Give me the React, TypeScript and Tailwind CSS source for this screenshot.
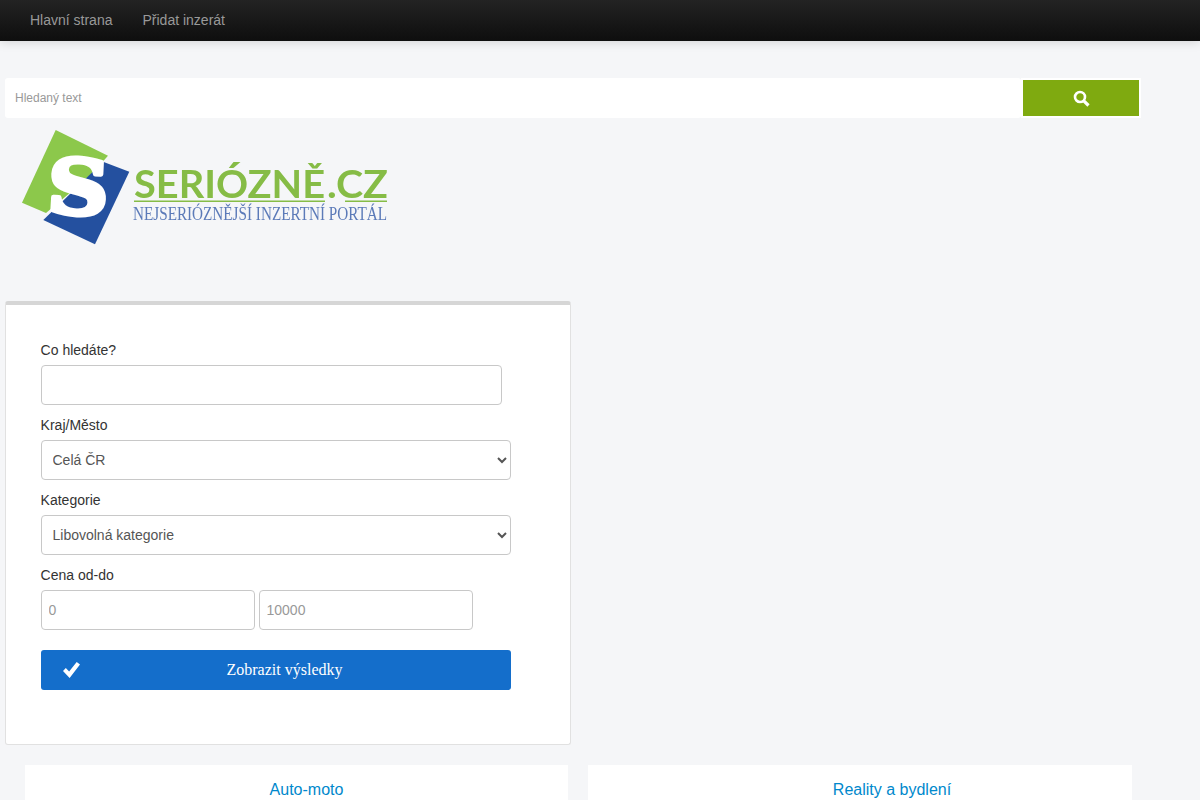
import React from "react";

const fieldClass =
    "h-10 rounded-[4px] border border-[#c8c8c8] bg-white text-sm text-[#555] placeholder:text-[#999] outline-none";

function Logo() {
    return (
        <svg width="370" height="120" viewBox="20 128 370 120" className="block blur-[0.4px]">
            <polygon points="55.7,130 108,155.7 90,176 46,213 22,202.7" fill="#8cc84b" />
            <polygon points="103,161.7 129.3,171.7 95,244.3 43.3,220" fill="#24509f" />
            <text
                x="0"
                y="0"
                textAnchor="middle"
                transform="translate(77 214) rotate(3) scale(1.12 1)"
                fontFamily="'DejaVu Serif', serif"
                fontWeight="700"
                fontSize="76"
                fill="#fff"
                stroke="#fff"
                strokeWidth="4.5"
                strokeLinejoin="round"
            >
                S
            </text>
            <text x="134" y="198" fontFamily="Lato, sans-serif" fontWeight="700" fontSize="38" fill="#86bc46" textLength="191" lengthAdjust="spacingAndGlyphs">
                SERIÓZNĚ
            </text>
            <text x="327" y="198" fontFamily="Lato, sans-serif" fontWeight="700" fontSize="38" fill="#86bc46" textLength="61" lengthAdjust="spacingAndGlyphs">
                .CZ
            </text>
            <rect x="134" y="200.5" width="191" height="1.5" fill="#86bc46" />
            <rect x="345" y="200.5" width="42" height="1.5" fill="#86bc46" />
            <text
                x="133"
                y="220"
                fontFamily="'Liberation Serif', serif"
                fontSize="19"
                fill="#3f64ad"
                fillOpacity="0.85"
                textLength="254"
                lengthAdjust="spacingAndGlyphs"
            >
                NEJSERIÓZNĚJŠÍ INZERTNÍ PORTÁL
            </text>
        </svg>
    );
}

function Label({ children }: { children: React.ReactNode }) {
    return <label className="mb-[5px] -ml-[0.4px] block h-5 text-sm leading-5 text-[#333]">{children}</label>;
}

export default function App() {
    return (
        <div className="min-h-screen bg-[#f5f6f8] font-['Liberation_Sans',sans-serif] text-[#333]">
            {/* nav */}
            <nav className="flex h-[41px] items-center bg-gradient-to-b from-[#232323] to-[#0e0e0e] px-[15px] pb-[2px] shadow-[0_1px_10px_rgba(0,0,0,0.15)]">
                <a className="px-[15px] text-sm text-[#999]">Hlavní strana</a>
                <a className="px-[15px] text-sm text-[#999]">Přidat inzerát</a>
            </nav>

            {/* search */}
            <div className="ml-[5px] mt-[37px] flex h-10 w-[1136px]">
                <input
                    placeholder="Hledaný text"
                    className="h-10 w-[1016px] rounded-[3px] bg-white px-[10px] text-xs text-[#555] outline-none placeholder:text-[#999]"
                />
                <button className="flex h-10 w-[120px] items-center justify-center border-2 border-white bg-[#7faa10]">
                    <svg width="17" height="17" viewBox="0 0 17 17" fill="none" stroke="#fff">
                        <circle cx="7" cy="7" r="5" strokeWidth="2.6" />
                        <path d="M10.8 10.8 15.5 15.5" strokeWidth="3.2" />
                    </svg>
                </button>
            </div>

            {/* logo */}
            <div className="ml-5 mt-[10px] h-[173px]">
                <Logo />
            </div>

            {/* form */}
            <div className="ml-[5px] w-[566px] rounded-[3px] border border-t-4 border-[#e1e1e1] border-t-[#d6d6d6] bg-white px-[35px] pb-[54px] pt-[35px]">
                <Label>Co hledáte?</Label>
                <input className={`${fieldClass} mb-[10px] block w-[461px] px-3`} />

                <Label>Kraj/Město</Label>
                <select className={`${fieldClass} mb-[10px] block w-[470px] px-[6.5px]`} defaultValue="Celá ČR">
                    <option>Celá ČR</option>
                </select>

                <Label>Kategorie</Label>
                <select className={`${fieldClass} mb-[10px] block w-[470px] px-[6.5px]`} defaultValue="Libovolná kategorie">
                    <option>Libovolná kategorie</option>
                </select>

                <Label>Cena od-do</Label>
                <div className="flex gap-1">
                    <input placeholder="0" className={`${fieldClass} w-[214px] px-[6.5px]`} />
                    <input placeholder="10000" className={`${fieldClass} w-[214px] px-[6.5px]`} />
                </div>

                <button className="relative mt-5 block h-10 w-[470px] rounded-[3px] bg-[#146ecb] pl-[17px] font-['Liberation_Serif',serif] text-base text-white">
                    <svg width="17" height="16" viewBox="0 0 18 16" className="absolute left-[22px] top-[12px]" fill="#fff" preserveAspectRatio="none">
                        <path d="M0 9 3 6 6.5 9.5 14.5 0 18 2.6 7 16Z" />
                    </svg>
                    Zobrazit výsledky
                </button>
            </div>

            {/* categories */}
            <div className="ml-[25px] mt-5 flex w-[1107px] gap-5">
                <div className="h-[120px] w-[543px] bg-white pl-5 pt-[15px] text-center text-base leading-5 text-[#0088cc]">Auto-moto</div>
                <div className="h-[120px] w-[544px] bg-white pl-16 pt-[15px] text-center text-base leading-5 text-[#0088cc]">Reality a bydlení</div>
            </div>
        </div>
    );
}
